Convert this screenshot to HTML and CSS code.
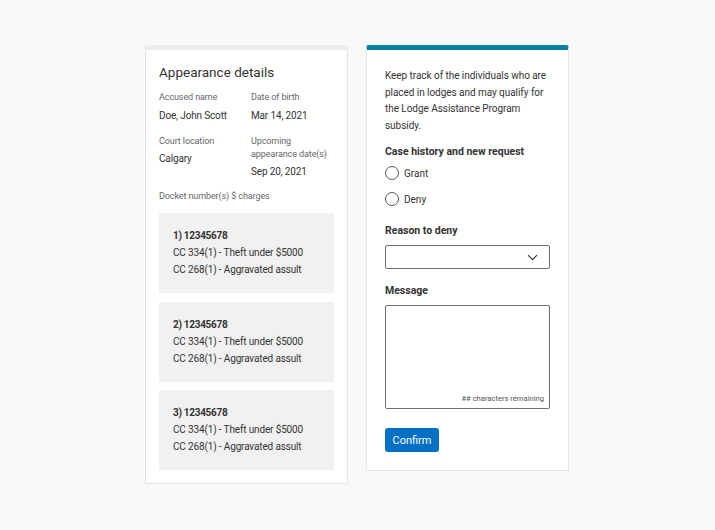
FILE: index.html
```html
<!DOCTYPE html>
<html lang="en">
<head>
<meta charset="utf-8">
<title>Appearance details</title>
<link rel="stylesheet" href="styles.css">
</head>
<body>
<main class="layout">
  <section class="card details">
    <h2 class="title">Appearance details</h2>
    <div class="fields">
      <div class="field">
        <div class="label">Accused name</div>
        <div class="value">Doe, John Scott</div>
      </div>
      <div class="field">
        <div class="label">Date of birth</div>
        <div class="value">Mar 14, 2021</div>
      </div>
      <div class="field">
        <div class="label">Court location</div>
        <div class="value">Calgary</div>
      </div>
      <div class="field">
        <div class="label">Upcoming<br>appearance date(s)</div>
        <div class="value">Sep 20, 2021</div>
      </div>
    </div>
    <div class="label docket-label">Docket number(s) $ charges</div>
    <div class="dockets">
      <div class="docket">
        <div class="docket-num">1) 12345678</div>
        <div>CC 334(1) - Theft under $5000</div>
        <div>CC 268(1) - Aggravated assult</div>
      </div>
      <div class="docket">
        <div class="docket-num">2) 12345678</div>
        <div>CC 334(1) - Theft under $5000</div>
        <div>CC 268(1) - Aggravated assult</div>
      </div>
      <div class="docket">
        <div class="docket-num">3) 12345678</div>
        <div>CC 334(1) - Theft under $5000</div>
        <div>CC 268(1) - Aggravated assult</div>
      </div>
    </div>
  </section>

  <section class="card form">
    <p class="intro">Keep track of the individuals who are placed in lodges and may qualify for the Lodge Assistance Program subsidy.</p>
    <div class="form-label">Case history and new request</div>
    <div class="radios">
      <label class="radio"><span class="circle"></span>Grant</label>
      <label class="radio"><span class="circle"></span>Deny</label>
    </div>
    <div class="form-label gap-top">Reason to deny</div>
    <div class="select">
      <svg class="chevron" width="11" height="7" viewBox="0 0 11 7"><path d="M1 1.2 L5.5 5.7 L10 1.2" fill="none" stroke="#333" stroke-width="1.1"/></svg>
    </div>
    <div class="form-label gap-top">Message</div>
    <div class="textarea">
      <span class="counter">## characters remaining</span>
    </div>
    <button class="btn">Confirm</button>
  </section>
</main>
</body>
</html>
```

FILE: styles.css
```css
* { box-sizing: border-box; }
html, body {
  margin: 0;
  padding: 0;
  background: #f8f8f8;
  font-family: Roboto, "Liberation Sans", sans-serif;
  color: #333;
}
.layout {
  display: flex;
  justify-content: flex-start;
  align-items: flex-start;
  gap: 18px;
  padding-top: 45px;
  padding-left: 145px;
}
.card {
  background: #fff;
  border: 1px solid #e4e4e4;
}
.details {
  width: 203px;
  border-top: 5px solid #ececec;
  padding: 12px 13px 13px;
}
.title {
  margin: 0;
  font-size: 13.5px;
  font-weight: 400;
  line-height: 20px;
  color: #333;
}
.fields {
  display: grid;
  grid-template-columns: 92px 1fr;
  row-gap: 11px;
  margin-top: 9px;
}
.label {
  font-size: 9px;
  line-height: 13px;
  letter-spacing: -0.1px;
  color: #666;
}
.value {
  margin-top: 3.5px;
  font-size: 10px;
  line-height: 16px;
  letter-spacing: -0.15px;
  color: #333;
}
.docket-label {
  margin-top: 10px;
}
.dockets {
  display: flex;
  flex-direction: column;
  gap: 8.5px;
  margin-top: 10px;
}
.docket {
  background: #f1f1f1;
  padding: 14px 14px 15px;
  font-size: 10px;
  line-height: 17px;
  letter-spacing: -0.15px;
  color: #333;
  height: 80px;
}
.docket-num {
  font-weight: 700;
  letter-spacing: -0.3px;
}
.form {
  width: 203px;
  border-top: 5px solid #0081a2;
  border-radius: 3px 3px 2px 2px;
  padding: 18px 18px 18px;
}
.intro {
  margin: 0;
  font-size: 10px;
  line-height: 16.6px;
  letter-spacing: -0.05px;
  color: #333;
}
.form-label {
  margin-top: 10px;
  font-size: 10.5px;
  font-weight: 700;
  line-height: 16px;
  color: #333;
}
.gap-top {
  margin-top: 14px;
}
.radios {
  display: flex;
  flex-direction: column;
  gap: 6px;
  margin-top: 3px;
}
.radio {
  display: flex;
  align-items: center;
  gap: 5px;
  height: 20px;
  font-size: 10px;
  color: #333;
}
.circle {
  width: 14px;
  height: 14px;
  border: 1px solid #555;
  border-radius: 50%;
  background: #fff;
}
.select {
  margin-top: 6px;
  height: 24px;
  border: 1px solid #6f6f6f;
  border-radius: 2px;
  display: flex;
  align-items: center;
  justify-content: flex-end;
  padding-right: 11px;
}
.chevron {
  display: block;
}
.textarea {
  margin-top: 6px;
  height: 104px;
  border: 1px solid #6f6f6f;
  border-radius: 2px;
  display: flex;
  align-items: flex-end;
  justify-content: flex-end;
  padding: 0 5px 4px;
}
.counter {
  font-size: 7.6px;
  line-height: 10px;
  color: #555;
}
.btn {
  display: block;
  margin-top: 19px;
  height: 24px;
  width: 54px;
  padding: 0;
  border: none;
  border-radius: 3px;
  background: #0070c4;
  color: #fff;
  font-family: Roboto, "Liberation Sans", sans-serif;
  font-size: 11px;
}
```
